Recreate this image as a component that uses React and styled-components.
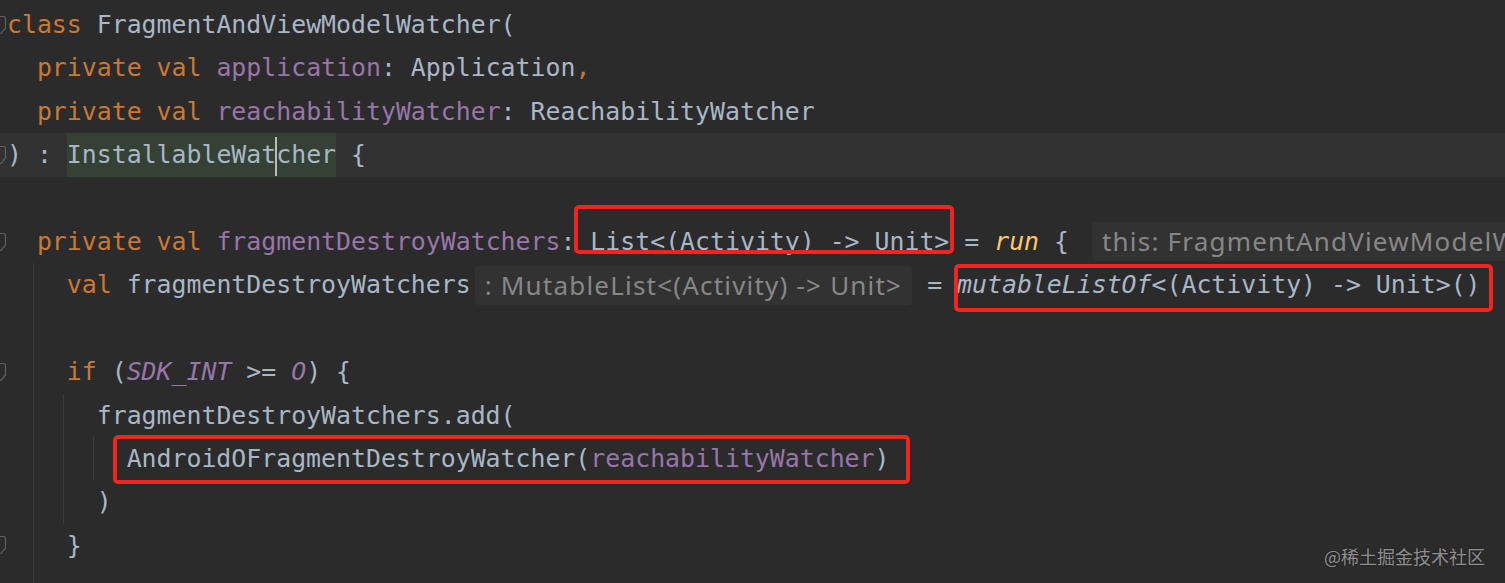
import React from 'react';
import styled, { createGlobalStyle } from 'styled-components';

const GlobalStyle = createGlobalStyle`
  html, body {
    margin: 0;
    padding: 0;
    background: #2b2b2b;
  }
  body {
    overflow: hidden;
  }
`;

const Editor = styled.div`
  position: relative;
  width: 1505px;
  height: 583px;
  overflow: hidden;
  box-sizing: border-box;
  padding-top: 3px;
  background: #2b2b2b;
  color: #a9b7c6;
  font-family: "DejaVu Sans Mono", "Liberation Mono", monospace;
  font-size: 24.85px;
`;

const Line = styled.div`
  display: flex;
  align-items: center;
  height: 43.4px;
  line-height: 43.4px;
  white-space: pre;
  background: ${p => (p.$current ? '#323232' : 'transparent')};
  & > * {
    flex-shrink: 0;
  }
`;

const Gutter = styled.div`
  width: 7px;
  height: 100%;
  overflow: hidden;
  display: flex;
  align-items: center;
`;

const Indent = styled.span`
  display: inline-block;
  width: 2ch;
  height: 100%;
  background: ${p =>
    p.$guide
      ? 'linear-gradient(to right, transparent 26px, #3b3b3b 26px, #3b3b3b 27px, transparent 27px)'
      : 'none'};
`;

const palette = {
  kw: '#cc7832',
  prop: '#9876aa',
  fn: '#ffc66d',
  plain: '#a9b7c6',
};

const Tok = styled.span`
  color: ${p => palette[p.$k || 'plain']};
  font-style: ${p => (p.$i ? 'italic' : 'normal')};
`;

const Usage = styled.span`
  background: #344134;
`;

const Caret = styled.span`
  display: inline-block;
  width: 2px;
  height: 39px;
  margin: 0 -1px;
  vertical-align: middle;
  background: #bbbbbb;
`;

const Hint = styled.span`
  height: 39px;
  line-height: 39px;
  margin-left: ${p => p.$gap}px;
  padding: 0 10px;
  border-radius: 4px;
  background: #323232;
  color: #878787;
  font-family: "Noto Sans", "Open Sans", sans-serif;
  font-size: 26px;
  letter-spacing: 1.2px;
`;

const Boxed = styled.span`
  position: relative;
  &::after {
    content: '';
    position: absolute;
    top: ${p => p.$t}px;
    bottom: ${p => p.$b}px;
    left: ${p => p.$l}px;
    right: ${p => p.$r}px;
    border: 4px solid #f2241d;
    border-radius: 5px;
    pointer-events: none;
  }
`;

const Watermark = styled.div`
  position: absolute;
  right: 20px;
  bottom: 14px;
  color: #8e8e8e;
  font-family: "Noto Sans CJK SC", "Noto Sans", sans-serif;
  font-size: 18px;
  text-shadow: 0 0 2px rgba(0, 0, 0, 0.4);
`;

function Fold() {
  return (
    <svg width="7" height="20" viewBox="0 0 7 20">
      <path d="M-6 1.5 H3.5 a2 2 0 0 1 2 2 V13 L1 18.5 H-6" fill="none" stroke="#5d6063" strokeWidth="1.2" />
    </svg>
  );
}

function Row({ guides = [], fold, current, children }) {
  return (
    <Line $current={current}>
      <Gutter>{fold && <Fold />}</Gutter>
      {guides.map((g, i) => (
        <Indent key={i} $guide={g} />
      ))}
      {children}
    </Line>
  );
}

export default function App() {
  return (
    <>
      <GlobalStyle />
      <Editor>
        <Row fold>
          <Tok $k="kw">class </Tok>
          <Tok>FragmentAndViewModelWatcher(</Tok>
        </Row>
        <Row guides={[false]}>
          <Tok $k="kw">private val </Tok>
          <Tok $k="prop">application</Tok>
          <Tok>: Application</Tok>
          <Tok $k="kw">,</Tok>
        </Row>
        <Row guides={[false]}>
          <Tok $k="kw">private val </Tok>
          <Tok $k="prop">reachabilityWatcher</Tok>
          <Tok>: ReachabilityWatcher</Tok>
        </Row>
        <Row fold current>
          <Tok>) : </Tok>
          <Usage>
            InstallableWat<Caret />cher
          </Usage>
          <Tok> {'{'}</Tok>
        </Row>
        <Row />
        <Row fold guides={[false]}>
          <Tok $k="kw">private val </Tok>
          <Tok $k="prop">fragmentDestroyWatchers</Tok>
          <Tok>:</Tok>
          <Boxed $t={-15} $b={9} $l={-1} $r={-5}>
            <Tok> List&lt;(Activity) -&gt; Unit&gt;</Tok>
          </Boxed>
          <Tok> = </Tok>
          <Tok $k="fn" $i>run</Tok>
          <Tok> {'{'}</Tok>
          <Hint $gap={23}>this: FragmentAndViewModelWatcher</Hint>
        </Row>
        <Row guides={[true, false]}>
          <Tok $k="kw">val </Tok>
          <Tok>fragmentDestroyWatchers</Tok>
          <Hint $gap={4}>: MutableList&lt;(Activity) -&gt; Unit&gt;</Hint>
          <Tok> = </Tok>
          <Boxed $t={1} $b={-5} $l={-3} $r={-12}>
            <Tok $i>mutableListOf</Tok>
            <Tok>&lt;(Activity) -&gt; Unit&gt;()</Tok>
          </Boxed>
        </Row>
        <Row guides={[true]} />
        <Row fold guides={[true, false]}>
          <Tok $k="kw">if </Tok>
          <Tok>(</Tok>
          <Tok $k="prop" $i>SDK_INT</Tok>
          <Tok> &gt;= </Tok>
          <Tok $k="prop" $i>O</Tok>
          <Tok>) {'{'}</Tok>
        </Row>
        <Row guides={[true, true, false]}>
          <Tok>fragmentDestroyWatchers.add(</Tok>
        </Row>
        <Row guides={[true, true, true, false]}>
          <Boxed $t={-2} $b={-4} $l={-14} $r={-21}>
            <Tok>AndroidOFragmentDestroyWatcher(</Tok>
            <Tok $k="prop">reachabilityWatcher</Tok>
            <Tok>)</Tok>
          </Boxed>
        </Row>
        <Row guides={[true, true, false]}>
          <Tok>)</Tok>
        </Row>
        <Row fold guides={[true, false]}>
          <Tok>{'}'}</Tok>
        </Row>
        <Row guides={[true]} />
        <Watermark>@稀土掘金技术社区</Watermark>
      </Editor>
    </>
  );
}
